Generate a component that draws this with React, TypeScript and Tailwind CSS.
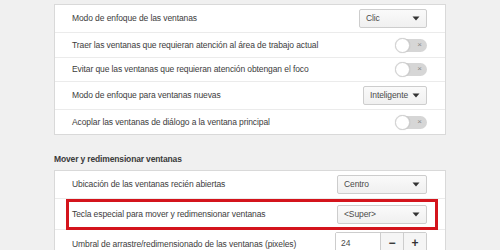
import React from "react";

const font = { fontFamily: '"Liberation Sans", Arial, sans-serif' };

function Arrow() {
  return (
    <svg width="8" height="5" viewBox="0 0 8 5" className="shrink-0">
      <path d="M0.5 0.5 L7.5 0.5 L4 4.5 Z" fill="#333" />
    </svg>
  );
}

function Dropdown({ label, w }: { label: string; w: string }) {
  return (
    <div
      className={`${w} h-[19px] shrink-0 flex items-center justify-between pl-[6px] pr-[6px] border border-[#cdcdcd] rounded-[2px] bg-gradient-to-b from-[#fafafa] to-[#f0f0f0] text-[#4a4a4a] text-[8.5px] tracking-[-0.1px]`}
    >
      <span>{label}</span>
      <Arrow />
    </div>
  );
}

function Toggle() {
  return (
    <div className="relative shrink-0 w-[31px] h-[13px] rounded-full bg-[#d6d6d6] flex items-center">
      <div className="absolute left-[-1px] top-[-1px] w-[15px] h-[15px] rounded-full bg-white border border-[#d0d0d0] shadow-[0_0_1px_rgba(0,0,0,0.2)]" />
      <span className="absolute right-[5px] top-[-1px] text-[8px] leading-[13px] text-[#8a8a8a]">×</span>
    </div>
  );
}

function Row({
  label,
  h,
  children,
  last,
}: {
  label: string;
  h: string;
  children: React.ReactNode;
  last?: boolean;
}) {
  return (
    <div
      className={`${h} flex items-center justify-between pl-[17px] pr-[18px] ${last ? "" : "border-b border-[#ebebeb]"}`}
    >
      <span className="text-[8.5px] tracking-[-0.1px] text-[#3c3c3c] whitespace-nowrap">{label}</span>
      {children}
    </div>
  );
}

export default function App() {
  return (
    <div className="w-[500px] h-[250px] bg-[#f0f0f0] overflow-hidden pt-[4px]" style={font}>
      <div className="mx-[54px] bg-white border border-[#d9d9d9]">
        <Row label="Modo de enfoque de las ventanas" h="h-[28px]">
          <Dropdown label="Clic" w="w-[68px]" />
        </Row>
        <Row label="Traer las ventanas que requieran atención al área de trabajo actual" h="h-[25px]">
          <Toggle />
        </Row>
        <Row label="Evitar que las ventanas que requieran atención obtengan el foco" h="h-[24px]">
          <Toggle />
        </Row>
        <Row label="Modo de enfoque para ventanas nuevas" h="h-[28px]">
          <Dropdown label="Inteligente" w="w-[64px]" />
        </Row>
        <Row label="Acoplar las ventanas de diálogo a la ventana principal" h="h-[24px]" last>
          <Toggle />
        </Row>
      </div>

      <div className="mx-[54px] mt-[17px] h-[14px] flex items-center text-[8.5px] tracking-[-0.15px] font-bold text-[#3a3a3a]">
        Mover y redimensionar ventanas
      </div>

      <div className="mx-[54px] mt-[4px] bg-white border border-[#d9d9d9]">
        <Row label="Ubicación de las ventanas recién abiertas" h="h-[28px]">
          <Dropdown label="Centro" w="w-[90px]" />
        </Row>
        <div className="relative">
          <Row label="Tecla especial para mover y redimensionar ventanas" h="h-[31px]">
            <Dropdown label="<Super>" w="w-[90px]" />
          </Row>
          <div className="absolute left-[11px] right-[7px] top-0 bottom-0 border-[3px] border-[#d4141c] pointer-events-none" />
        </div>
        <div className="h-[30px] flex items-start justify-between pl-[17px] pr-[18px] pt-[2px]">
          <span className="text-[8.5px] tracking-[-0.1px] text-[#3c3c3c] whitespace-nowrap mt-[6px]">
            Umbral de arrastre/redimensionado de las ventanas (pixeles)
          </span>
          <div className="flex shrink-0 h-[22px] border border-[#cdcdcd] rounded-[2px]">
            <div className="w-[44px] bg-white pl-[5px] flex items-center text-[8.5px] text-[#4a4a4a]">24</div>
            <div className="w-[23px] border-l border-[#cdcdcd] bg-[#f5f5f5] flex items-center justify-center text-[12px] font-bold text-[#333]">−</div>
            <div className="w-[23px] border-l border-[#cdcdcd] bg-[#f5f5f5] flex items-center justify-center text-[12px] font-bold text-[#333]">+</div>
          </div>
        </div>
      </div>
    </div>
  );
}
